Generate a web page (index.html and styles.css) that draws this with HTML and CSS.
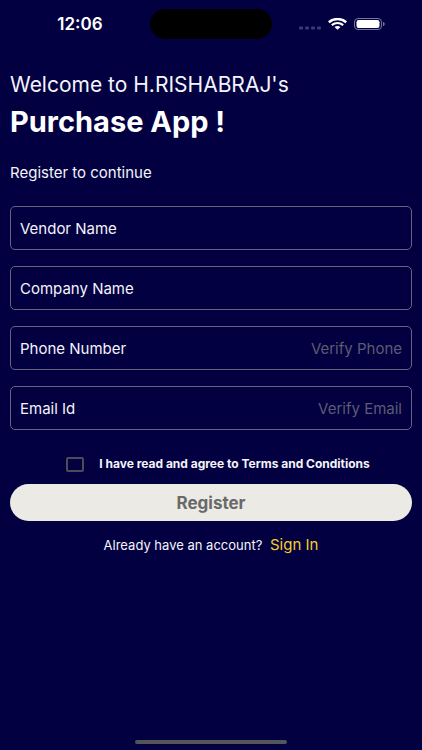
FILE: index.html
```html
<!DOCTYPE html>
<html lang="en">
<head>
    <meta charset="UTF-8">
    <meta name="viewport" content="width=device-width, initial-scale=1.0">
    <title>Purchase App - Register</title>
    <link rel="stylesheet" href="styles.css">
</head>
<body>
    <header class="status-bar">
        <span class="status-time">12:06</span>
        <div class="island"></div>
        <div class="status-icons">
            <svg width="22" height="4" viewBox="0 0 22 4" fill="#3b3976" aria-hidden="true">
                <rect x="0" y="0.5" width="4" height="3" rx="1"/>
                <rect x="6" y="0.5" width="4" height="3" rx="1"/>
                <rect x="12" y="0.5" width="4" height="3" rx="1"/>
                <rect x="18" y="0.5" width="4" height="3" rx="1"/>
            </svg>
            <svg class="wifi" width="19" height="12" viewBox="0 0 19 12" fill="none" stroke="#fff" aria-hidden="true">
                <path d="M0.8 4.2C5.8 0 13.2 0 18.2 4.2" stroke-width="2.5"/>
                <path d="M3.8 7.1C7.2 4.4 11.8 4.4 15.2 7.1" stroke-width="2.2"/>
                <path d="M6.5 9.1C8.3 7.7 10.7 7.7 12.5 9.1L9.5 11.8Z" fill="#fff" stroke="none"/>
            </svg>
            <svg width="31" height="12" viewBox="0 0 31 12" aria-hidden="true">
                <rect x="0.5" y="0.5" width="27" height="11" rx="3.5" fill="none" stroke="#77759f"/>
                <rect x="2.5" y="2" width="23" height="8" rx="2.2" fill="#fff"/>
                <path d="M29 4C31.3 4.6 31.3 7.4 29 8Z" fill="#77759f"/>
            </svg>
        </div>
    </header>

    <main class="container">
        <h1><span class="welcome">Welcome to H.RISHABRAJ's</span> <span class="app-name">Purchase App !</span></h1>
        <p class="subtitle">Register to continue</p>

        <form id="registerForm">
            <div class="field">
                <input type="text" id="vendorName" placeholder="Vendor Name" aria-label="Vendor Name">
            </div>
            <div class="field">
                <input type="text" id="companyName" placeholder="Company Name" aria-label="Company Name">
            </div>
            <div class="field">
                <input type="tel" id="phoneNumber" placeholder="Phone Number" aria-label="Phone Number">
                <button type="button" class="verify" disabled>Verify Phone</button>
            </div>
            <div class="field">
                <input type="email" id="emailId" placeholder="Email Id" aria-label="Email Id">
                <button type="button" class="verify" disabled>Verify Email</button>
            </div>

            <div class="terms">
                <input type="checkbox" id="terms">
                <label for="terms">I have read and agree to Terms and Conditions</label>
            </div>

            <button type="submit" class="register" disabled>Register</button>
        </form>

        <p class="sign-in">Already have an account? <a href="#">Sign In</a></p>
    </main>

    <div class="home-indicator"></div>
</body>
</html>
```

FILE: styles.css
```css
* {
    box-sizing: border-box;
}

body {
    display: flex;
    flex-direction: column;
    min-height: 100vh;
    margin: 0;
    background-color: #020041;
    color: #f4f4fa;
    font-family: Inter, "Liberation Sans", sans-serif;
}

/* Phone status bar */
.status-bar {
    display: grid;
    grid-template-columns: 1fr 122px 1fr;
    align-items: center;
    height: 48px;
}

.status-time {
    padding-left: 10px;
    text-align: center;
    font-size: 17px;
    font-weight: 600;
    color: #fff;
}

.island {
    height: 30px;
    border-radius: 15px;
    background: #000;
}

.status-icons {
    display: flex;
    align-items: center;
    justify-content: flex-end;
    gap: 7px;
    padding-right: 37px;
}

.status-icons svg:first-child {
    margin-top: 8px;
}

/* Content */
.container {
    flex: 1;
    padding: 24px 10px;
}

h1 {
    margin: 0;
    font-weight: 400;
}

.welcome,
.app-name {
    display: block;
}

.welcome {
    font-size: 21px;
    line-height: 26px;
}

.app-name {
    margin-top: 8px;
    font-size: 29px;
    line-height: 32px;
    font-weight: 700;
    color: #fff;
}

.subtitle {
    margin: 25px 0 23px;
    font-size: 15px;
    line-height: 20px;
}

/* Form fields */
.field {
    display: flex;
    align-items: center;
    height: 44px;
    margin-bottom: 16px;
    padding: 0 9px;
    border: 1px solid #65637f;
    border-radius: 5px;
}

.field input {
    flex: 1;
    min-width: 0;
    padding: 0;
    border: 0;
    outline: 0;
    background: none;
    color: #f4f4fa;
    font-family: inherit;
    font-size: 15px;
}

.field input::placeholder {
    color: #f4f4fa;
    opacity: 1;
}

.verify {
    padding: 0;
    border: 0;
    background: none;
    color: #5d5b70;
    font-family: inherit;
    font-size: 15px;
}

.terms {
    display: flex;
    align-items: center;
    justify-content: center;
    gap: 15px;
    margin: 26px 0 12px;
    padding-left: 14px;
    font-size: 12px;
    line-height: 16px;
    font-weight: 700;
}

.terms input {
    appearance: none;
    width: 18px;
    height: 15px;
    margin: 0;
    border: 2px solid #4c4b58;
    border-radius: 2px;
}

.terms input:checked {
    background: #ffd21f;
}

.register {
    display: block;
    width: 100%;
    height: 37px;
    border: 0;
    border-radius: 19px;
    background: #ebeae5;
    color: #696969;
    font-family: inherit;
    font-size: 17px;
    font-weight: 700;
}

.sign-in {
    margin: 14px 0 0;
    text-align: center;
    font-size: 13px;
    line-height: 20px;
}

.sign-in a {
    margin-left: 4px;
    color: #f5cf28;
    font-size: 15px;
    text-decoration: none;
}

.home-indicator {
    width: 36%;
    height: 4px;
    margin: 0 auto 6px;
    border-radius: 2px;
    background: #555458;
}
```
